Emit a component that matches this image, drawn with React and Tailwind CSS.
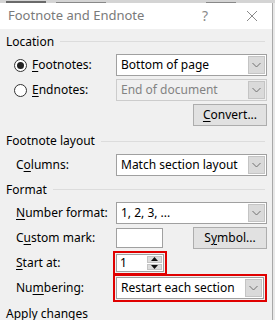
import React from "react";

const Chevron = ({ color = "#707070" }) => (
  <svg width="9" height="6" viewBox="0 0 9 6" fill="none">
    <path d="M0.5 1 L4.5 5 L8.5 1" stroke={color} strokeWidth="1" />
  </svg>
);

const Select = ({ value, disabled, className = "" }) => (
  <div
    className={`flex items-stretch h-[22px] border ${
      disabled ? "border-[#cccccc] bg-[#f0f0f0] text-[#838383]" : "border-[#a0a0a0] bg-white text-black"
    } ${className}`}
  >
    <div className="flex-1 flex items-center pl-[4px] leading-none">{value}</div>
    <div className="w-[17px] m-[1px] flex items-center justify-center bg-[#dadada] border border-[#c4c4c4]">
      <Chevron />
    </div>
  </div>
);

const Header = ({ children, className = "" }) => (
  <div className={`flex items-center h-[14px] pl-[6px] pr-[7px] gap-[6px] ${className}`}>
    <span className="leading-none">{children}</span>
    <div className="flex-1 h-px bg-[#dcdcdc]" />
  </div>
);

const Button = ({ children }) => (
  <div className="w-[74px] h-[22px] flex items-center justify-center bg-[#e1e1e1] border border-[#adadad] leading-none">
    {children}
  </div>
);

const Radio = ({ checked }) => (
  <div className="w-[13px] h-[13px] rounded-full border border-[#333] bg-white flex items-center justify-center">
    {checked && <div className="w-[7px] h-[7px] rounded-full bg-[#222]" />}
  </div>
);

const U = ({ children }) => <span className="underline underline-offset-2">{children}</span>;

export default function App() {
  return (
    <div
      className="w-[275px] h-[320px] overflow-hidden bg-[#e8e8e8] text-[12px] text-black"
      style={{ fontFamily: '"Noto Sans", "Open Sans", sans-serif' }}
    >
      <div className="h-[3px] bg-[#d4d4d4] flex gap-[10px] px-[6px] items-end">
        <div className="w-[40px] h-[2px] bg-[#6a6a6a]" />
        <div className="w-[50px] h-[1px] bg-[#888]" />
        <div className="w-[30px] h-[1px] bg-[#888] ml-[90px]" />
      </div>
      <div className="w-[273px] h-[317px] border-r border-[#a8a8a8] bg-[#f0f0f0] flex flex-col">
        <div className="h-[29px] bg-white flex items-center pl-[8px] text-[#7a7a7a] text-[13px]">
          <span className="flex-1 leading-none">Footnote and Endnote</span>
          <span className="w-[20px] text-[14px] leading-none text-[#8a8a8a]">?</span>
          <svg width="12" height="12" viewBox="0 0 12 12" className="ml-[24px] mr-[14px]">
            <path d="M1 1 L11 11 M11 1 L1 11" stroke="#8a8a8a" strokeWidth="1" />
          </svg>
        </div>

        <Header className="mt-[7px]">Location</Header>

        <div className="mt-[6px] flex items-center h-[22px] pr-[5px]">
          <div className="w-[116px] flex items-center pl-[14px] gap-[5px]">
            <Radio checked />
            <span className="leading-none"><U>F</U>ootnotes:</span>
          </div>
          <Select value="Bottom of page" className="flex-1" />
        </div>
        <div className="mt-[3px] flex items-center h-[22px] pr-[5px]">
          <div className="w-[116px] flex items-center pl-[14px] gap-[5px]">
            <Radio />
            <span className="leading-none"><U>E</U>ndnotes:</span>
          </div>
          <Select value="End of document" disabled className="flex-1" />
        </div>
        <div className="mt-[3px] flex justify-end pr-[5px]">
          <Button><U>C</U>onvert...</Button>
        </div>

        <Header className="mt-[9px]">Footnote layout</Header>
        <div className="mt-[6px] flex items-center h-[22px] pr-[5px]">
          <div className="w-[116px] pl-[16px] leading-none">C<U>o</U>lumns:</div>
          <Select value="Match section layout" className="flex-1" />
        </div>

        <Header className="mt-[8px]">Format</Header>
        <div className="mt-[6px] flex items-center h-[22px] pr-[5px]">
          <div className="w-[116px] pl-[16px] leading-none"><U>N</U>umber format:</div>
          <Select value="1, 2, 3, ..." className="flex-1" />
        </div>
        <div className="mt-[3px] flex items-center h-[22px] pr-[5px]">
          <div className="w-[116px] pl-[16px] leading-none">C<U>u</U>stom mark:</div>
          <div className="w-[47px] h-[20px] bg-white border border-[#a0a0a0]" />
          <div className="flex-1" />
          <Button>S<U>y</U>mbol...</Button>
        </div>
        <div className="mt-[2px] flex items-center h-[24px]">
          <div className="w-[113px] pl-[16px] leading-none"><U>S</U>tart at:</div>
          <div className="border-2 border-[#e00000] p-px">
            <div className="w-[48px] h-[18px] bg-white border border-[#a0a0a0] flex items-stretch">
              <div className="flex-1 flex items-center pl-[3px] leading-none">1</div>
              <div className="w-[15px] m-[1px] flex flex-col gap-px">
                <div className="flex-1 bg-[#dcdcdc] border border-[#c4c4c4] flex items-center justify-center">
                  <svg width="7" height="4" viewBox="0 0 7 4"><path d="M3.5 0 L7 4 L0 4 Z" fill="#111" /></svg>
                </div>
                <div className="flex-1 bg-[#dcdcdc] border border-[#c4c4c4] flex items-center justify-center">
                  <svg width="7" height="4" viewBox="0 0 7 4"><path d="M0 0 L7 0 L3.5 4 Z" fill="#111" /></svg>
                </div>
              </div>
            </div>
          </div>
        </div>
        <div className="flex items-center h-[26px] pr-[5px]">
          <div className="w-[113px] pl-[16px] leading-none">Nu<U>m</U>bering:</div>
          <div className="flex-1 border-2 border-[#e00000] p-px">
            <Select value="Restart each section" className="h-[20px]" />
          </div>
        </div>
        <div className="mt-[7px] pl-[6px] leading-none">Apply changes</div>
      </div>
    </div>
  );
}
